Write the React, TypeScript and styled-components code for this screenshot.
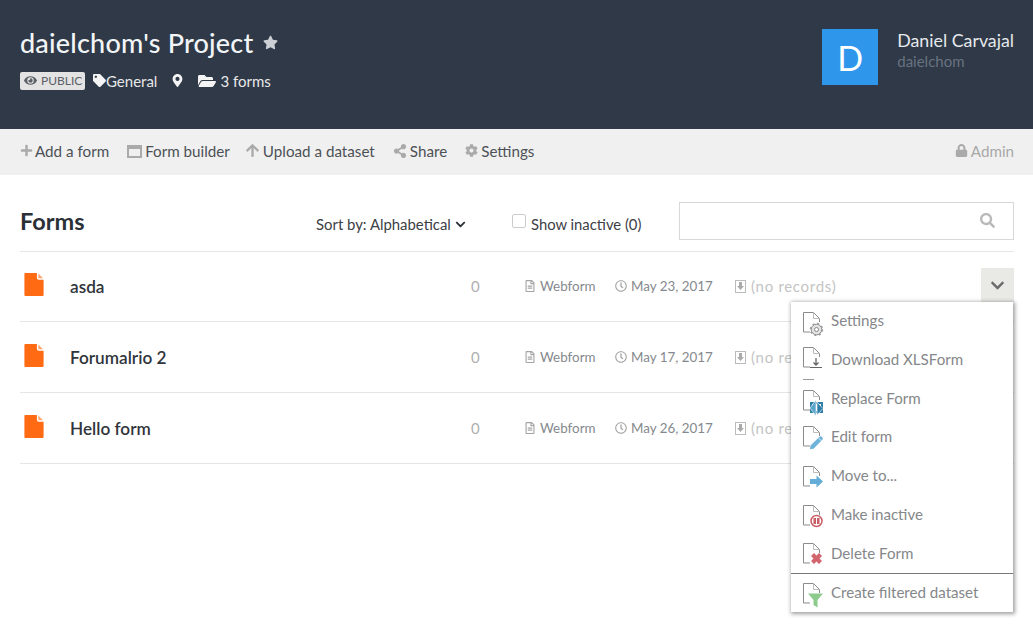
import React from "react";
import styled, { createGlobalStyle } from "styled-components";
import {
  FaArrowUp,
  FaChevronDown,
  FaCog,
  FaEye,
  FaFolderOpen,
  FaLock,
  FaMapMarkerAlt,
  FaPlus,
  FaRegClock,
  FaRegFileAlt,
  FaSearch,
  FaShareAlt,
  FaStar,
  FaTag,
} from "react-icons/fa";

const GlobalStyle = createGlobalStyle`
  html, body {
    margin: 0;
    padding: 0;
    background: #fff;
    font-family: "Lato", "Liberation Sans", sans-serif;
  }
`;

const Page = styled.div`
  width: 1033px;
  height: 627px;
  overflow: hidden;
  position: relative;
`;

const Header = styled.header`
  height: 129px;
  box-sizing: border-box;
  background: #2f3947;
  padding: 29px 19px 0 20px;
  display: flex;
  justify-content: space-between;
`;

const TitleRow = styled.div`
  display: flex;
  align-items: center;
  height: 26px;
  color: #f2f5f8;
  font-size: 27px;
  font-weight: 500;
  letter-spacing: 0.2px;
`;

const TitleStar = styled(FaStar)`
  color: #ccd0d5;
  font-size: 15px;
  margin-left: 10px;
`;

const MetaRow = styled.div`
  display: flex;
  align-items: center;
  margin-top: 17px;
  height: 17px;
  color: #e8e8e8;
  font-size: 15px;
`;

const PublicBadge = styled.span`
  display: inline-flex;
  align-items: center;
  gap: 4px;
  height: 18px;
  width: 65px;
  box-sizing: border-box;
  padding-left: 4px;
  background: #e3e3e3;
  border-radius: 2px;
  color: #5b6066;
  font-size: 12px;
`;

const MetaItem = styled.span<{ $left: number; $gap?: number }>`
  display: inline-flex;
  align-items: center;
  gap: ${(p) => p.$gap ?? 0}px;
  margin-left: ${(p) => p.$left}px;

  svg {
    color: #f4f4f4;
  }
`;

const User = styled.div`
  display: flex;
  gap: 19px;
`;

const Avatar = styled.div`
  width: 56px;
  height: 56px;
  background: #2e97ec;
  color: #fff;
  font-size: 34px;
  display: flex;
  align-items: center;
  justify-content: center;
`;

const UserName = styled.div`
  color: #e6e9ec;
  font-size: 17.8px;
  line-height: 22px;
`;

const UserLogin = styled.div`
  color: #687280;
  font-size: 15px;
  line-height: 20px;
`;

const Toolbar = styled.nav`
  height: 46px;
  box-sizing: border-box;
  background: #f0f0f0;
  padding: 0 19px 3px 20px;
  display: flex;
  align-items: center;
`;

const ToolItem = styled.span<{ $left?: number; $gap?: number }>`
  display: inline-flex;
  align-items: center;
  gap: ${(p) => p.$gap ?? 3}px;
  margin-left: ${(p) => p.$left ?? 0}px;
  color: #4d5156;
  font-size: 15.2px;

  svg {
    color: #aaa;
  }
`;

const WindowIcon = styled.span`
  display: inline-block;
  box-sizing: border-box;
  width: 15px;
  height: 13px;
  border: 2px solid #aaa;
  border-top-width: 4px;
  margin-top: 2px;
`;

const AdminLink = styled(ToolItem)`
  margin-left: auto;
  color: #a8a8a8;
`;

const Content = styled.main`
  padding: 0 19px 0 20px;
`;

const FormsBar = styled.div`
  height: 76.6px;
  box-sizing: border-box;
  padding-top: 20px;
  display: flex;
  align-items: center;
  border-bottom: 1px solid #e6e6e6;
`;

const FormsTitle = styled.h2`
  margin: 0 0 4px;
  width: 296px;
  color: #2b3036;
  font-size: 23.5px;
  font-weight: 700;
`;

const SortBy = styled.span`
  display: inline-flex;
  align-items: center;
  gap: 4px;
  width: 196px;
  margin-top: 3px;
  color: #3c4046;
  font-size: 14.9px;

  svg {
    font-size: 11px;
    color: #2b3036;
  }
`;

const ShowInactive = styled.label`
  display: inline-flex;
  gap: 5px;
  width: 167px;
  margin-top: 3px;
  color: #3c4046;
  font-size: 14.8px;
`;

const CheckBox = styled.span`
  display: inline-block;
  width: 12px;
  height: 12px;
  margin-top: -1px;
  border: 1px solid #ccc;
  border-radius: 2px;
  background: #fff;
`;

const SearchBox = styled.div`
  width: 335px;
  height: 38px;
  box-sizing: border-box;
  margin-top: -4px;
  border: 1px solid #d8d8d8;
  display: flex;
  align-items: center;
  justify-content: flex-end;
  padding-right: 18px;

  svg {
    color: #b9b9b9;
    font-size: 15px;
  }
`;

const FormRow = styled.div`
  height: 70.8px;
  box-sizing: border-box;
  display: flex;
  align-items: center;
  border-bottom: 1px solid #e6e6e6;
`;

const FormName = styled.span`
  width: 401px;
  color: #30353b;
  font-size: 17.2px;
  font-weight: 600;
`;

const RecordCount = styled.span`
  width: 53px;
  color: #b0b0b0;
  font-size: 15px;
`;

const RowMeta = styled.span<{ $width: number }>`
  display: inline-flex;
  align-items: center;
  gap: 4px;
  width: ${(p) => p.$width}px;
  color: #85898d;
  font-size: 13.4px;

  svg {
    color: #a5a5a5;
    font-size: 12px;
  }
`;

const NoRecords = styled.span`
  display: inline-flex;
  align-items: center;
  gap: 4px;
  color: #c4c4c4;
  font-size: 15px;
  letter-spacing: 0.7px;
`;

const RowToggle = styled.span`
  position: absolute;
  left: 981px;
  top: 268px;
  width: 33px;
  height: 34px;
  background: #e9e9e6;
  display: flex;
  align-items: center;
  justify-content: center;

  svg {
    color: #6b6b6b;
    font-size: 15px;
  }
`;

const Menu = styled.ul`
  position: absolute;
  left: 791px;
  top: 302px;
  width: 222px;
  height: 310px;
  box-sizing: border-box;
  margin: 0;
  padding: 0;
  list-style: none;
  background: #fff;
  box-shadow: 1px 1px 4px 1px rgba(0, 0, 0, 0.38);
`;

const MenuItem = styled.li<{ $divider?: boolean }>`
  height: 38.75px;
  box-sizing: border-box;
  padding: 9px 0 0 12px;
  display: flex;
  gap: 7px;
  color: #85878a;
  font-size: 15.1px;
  line-height: 18px;
  border-top: ${(p) => (p.$divider ? "1px solid #777" : "0")};
`;

const MenuRule = styled.span`
  position: absolute;
  left: 12px;
  top: 77px;
  width: 11px;
  height: 1px;
  background: #999;
`;

const MenuIconSvg = styled.svg<{ $top: number }>`
  flex: none;
  margin-top: ${(p) => p.$top}px;
`;

const OrangeFileSvg = styled.svg`
  flex: none;
  margin: -4px 26px 0 4px;
`;

const OrangeFile = () => (
  <OrangeFileSvg width="20" height="23" viewBox="0 0 20 24">
    <path d="M1 0h12v5a2 2 0 0 0 2 2h5v16a1 1 0 0 1-1 1H1a1 1 0 0 1-1-1V1a1 1 0 0 1 1-1z" fill="#ff6a13" />
    <path d="M14.500 0.500 19.500 5.500H15a.5.5 0 0 1-.5-.5z" fill="#ff6a13" opacity=".6" />
  </OrangeFileSvg>
);

const ImportIcon = () => (
  <svg width="12" height="13" viewBox="0 0 12 13">
    <rect x=".5" y=".5" width="10" height="12" fill="none" stroke="#bbb" />
    <path d="M4 2h3v4h2l-3.500 4L2 6h2z" fill="#aaa" />
  </svg>
);

type Overlay = "gear" | "download" | "replace" | "pencil" | "arrow" | "pause" | "cross" | "funnel";

const overlays: Record<Overlay, React.ReactNode> = {
  gear: (
    <g>
      <circle cx="13.500" cy="17.500" r="5.300" fill="#e2e2e2" stroke="#8a8a8a" />
      <circle cx="13.500" cy="17.500" r="6" fill="none" stroke="#999" strokeWidth="1.500" strokeDasharray="2 2.700" />
      <circle cx="13.500" cy="17.500" r="2" fill="#fff" stroke="#888" />
    </g>
  ),
  download: (
    <g stroke="#666" fill="none">
      <path d="M7 20.500h12" />
      <path d="M13 11v7M10.500 15.500l2.500 2.500 2.500-2.500" strokeWidth="1.300" />
    </g>
  ),
  replace: (
    <g>
      <rect x="8" y="13" width="11" height="9" fill="none" stroke="#2f7fa8" strokeWidth="2" />
      <path d="M13 10v16l-6-8z" fill="#5ba6cb" stroke="#fff" strokeWidth=".6" />
      <path d="M14 12v13l6-6.500z" fill="#2f7fa8" stroke="#fff" strokeWidth=".6" />
    </g>
  ),
  pencil: (
    <g>
      <path d="M7.500 19.500 16.500 10.800a1.500 1.500 0 0 1 2.100 0l.8.8a1.500 1.500 0 0 1 0 2.100L10.500 22.800l-3.500.5z" fill="#6db3da" />
      <path d="M15.500 12l3 3" stroke="#fff" strokeWidth=".7" />
    </g>
  ),
  arrow: <path d="M7 13h6.500V9.500l6.500 6-6.500 6V18H7z" fill="#63add6" />,
  pause: (
    <g>
      <circle cx="13.500" cy="16" r="5.500" fill="#fff" stroke="#c95f66" strokeWidth="1.500" />
      <rect x="10.500" y="13" width="2.500" height="6" fill="#c95f66" />
      <rect x="14" y="13" width="2.500" height="6" fill="#c95f66" />
    </g>
  ),
  cross: <path d="M11 10l2.500 2.500L16 10l3 3-2.500 2.500L19 18l-3 3-2.500-2.500L11 21l-3-3 2.500-2.500L8 13z" fill="#d1646c" />,
  funnel: <path d="M5 10.500h15l-5.500 6.500v7.500l-4-2.500V17z" fill="#8ccb8c" />,
};

const MenuIcon: React.FC<{ type: Overlay; top: number }> = ({ type, top }) => (
  <MenuIconSvg $top={top} width="21" height="27" viewBox="0 0 21 27">
    <path d="M7 20H.5V.5h10l6 6v3.500" fill="#fff" stroke="#8b8b8b" />
    <path d="M10.500.5v6h6" fill="none" stroke="#bbb" />
    {overlays[type]}
  </MenuIconSvg>
);

const forms = [
  { name: "asda", date: "May 23, 2017" },
  { name: "Forumalrio 2", date: "May 17, 2017" },
  { name: "Hello form", date: "May 26, 2017" },
];

const menuItems: Array<{ label: string; icon: Overlay; top: number; divider?: boolean }> = [
  { label: "Settings", icon: "gear", top: 1 },
  { label: "Download XLSForm", icon: "download", top: -3 },
  { label: "Replace Form", icon: "replace", top: 1 },
  { label: "Edit form", icon: "pencil", top: -1 },
  { label: "Move to...", icon: "arrow", top: 0 },
  { label: "Make inactive", icon: "pause", top: 0 },
  { label: "Delete Form", icon: "cross", top: -1 },
  { label: "Create filtered dataset", icon: "funnel", top: 0, divider: true },
];

const App: React.FC = () => {
  return (
    <Page>
      <GlobalStyle />
      <Header>
        <div>
          <TitleRow>
            daielchom's Project
            <TitleStar />
          </TitleRow>
          <MetaRow>
            <PublicBadge>
              <FaEye size={13} />
              PUBLIC
            </PublicBadge>
            <MetaItem $left={8}>
              <FaTag size={13} />
              General
            </MetaItem>
            <MetaItem $left={14}>
              <FaMapMarkerAlt size={13} />
            </MetaItem>
            <MetaItem $left={14} $gap={4}>
              <FaFolderOpen size={18} />
              3 forms
            </MetaItem>
          </MetaRow>
        </div>
        <User>
          <Avatar>D</Avatar>
          <div>
            <UserName>Daniel Carvajal</UserName>
            <UserLogin>daielchom</UserLogin>
          </div>
        </User>
      </Header>
      <Toolbar>
        <ToolItem $gap={2}>
          <FaPlus size={13} />
          Add a form
        </ToolItem>
        <ToolItem $left={18}>
          <WindowIcon />
          Form builder
        </ToolItem>
        <ToolItem $left={15}>
          <FaArrowUp size={15} />
          Upload a dataset
        </ToolItem>
        <ToolItem $left={18}>
          <FaShareAlt size={14} />
          Share
        </ToolItem>
        <ToolItem $left={18}>
          <FaCog size={13} />
          Settings
        </ToolItem>
        <AdminLink>
          <FaLock size={13} />
          Admin
        </AdminLink>
      </Toolbar>
      <Content>
        <FormsBar>
          <FormsTitle>Forms</FormsTitle>
          <SortBy>
            Sort by: Alphabetical
            <FaChevronDown />
          </SortBy>
          <ShowInactive>
            <CheckBox />
            Show inactive (0)
          </ShowInactive>
          <SearchBox>
            <FaSearch />
          </SearchBox>
        </FormsBar>
        {forms.map((form) => (
          <FormRow key={form.name}>
            <OrangeFile />
            <FormName>{form.name}</FormName>
            <RecordCount>0</RecordCount>
            <RowMeta $width={91}>
              <FaRegFileAlt />
              Webform
            </RowMeta>
            <RowMeta $width={120}>
              <FaRegClock />
              {form.date}
            </RowMeta>
            <NoRecords>
              <ImportIcon />
              (no records)
            </NoRecords>
          </FormRow>
        ))}
      </Content>
      <RowToggle>
        <FaChevronDown />
      </RowToggle>
      <Menu>
        {menuItems.map((item) => (
          <MenuItem key={item.label} $divider={item.divider}>
            <MenuIcon type={item.icon} top={item.top} />
            {item.label}
          </MenuItem>
        ))}
        <MenuRule />
      </Menu>
    </Page>
  );
};

export default App;
